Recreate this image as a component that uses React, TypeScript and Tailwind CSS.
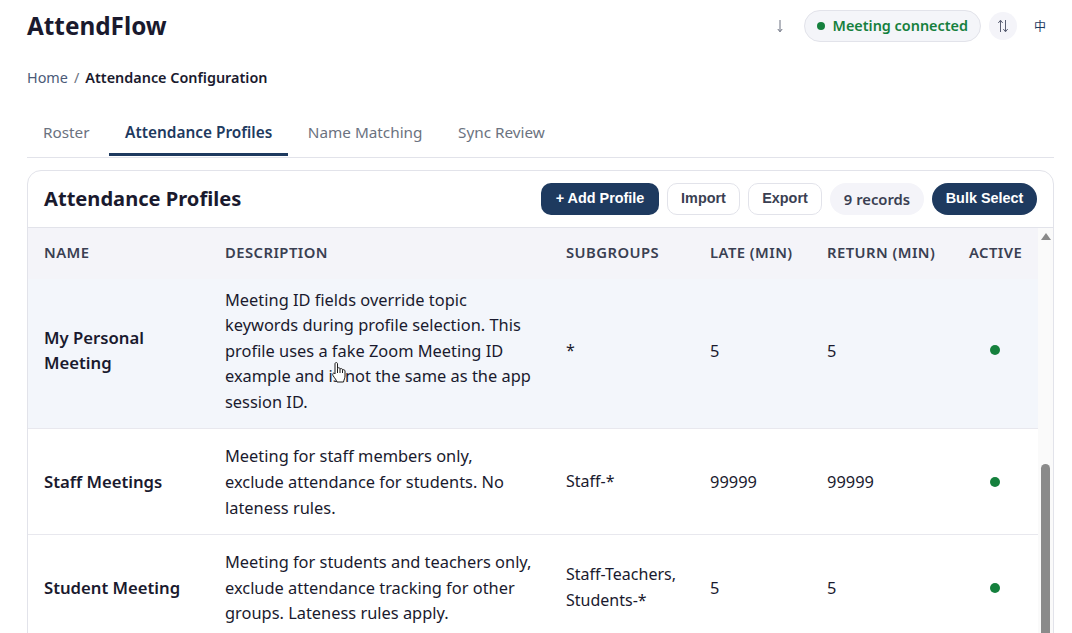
const profiles = [
  {
    name: 'My Personal Meeting',
    description:
      'Meeting ID fields override topic keywords during profile selection. This profile uses a fake Zoom Meeting ID example and is not the same as the app session ID.',
    subgroups: '*',
    late: '5',
    ret: '5',
    rowClass: 'bg-[#f3f6fb]',
    cellClass: 'pt-[7.500px] pb-[13.500px]',
  },
  {
    name: 'Staff Meetings',
    description: 'Meeting for staff members only, exclude attendance for students. No lateness rules.',
    subgroups: 'Staff-*',
    late: '99999',
    ret: '99999',
    rowClass: 'bg-white',
    cellClass: 'pt-[14.500px] pb-[13.500px]',
  },
  {
    name: 'Student Meeting',
    description:
      'Meeting for students and teachers only, exclude attendance tracking for other groups. Lateness rules apply.',
    subgroups: 'Staff-Teachers, Students-*',
    late: '5',
    ret: '5',
    rowClass: 'bg-white',
    cellClass: 'pt-[14.500px] pb-[13.500px]',
  },
]

const tabs = ['Roster', 'Attendance Profiles', 'Name Matching', 'Sync Review']

function HandCursor() {
  return (
    <svg
      viewBox="0 0 14 21"
      className="absolute left-[332px] top-[362px] h-[21px] w-[14px]"
      fill="#ffffff"
      stroke="#1a1a1a"
      strokeWidth="1"
      strokeLinejoin="round"
    >
      <path d="M3 11V2C3 0 5.500 0 5.500 2V6.500C5.500 5.500 8 5.500 8 6.800V7.300C8 6.300 10.500 6.300 10.500 7.600V8.300C10.500 7.300 13 7.500 13 9V14C13 16 12 17.500 11.500 20H5C4.500 18 2.500 16 1 13.500C0 11.500 1.800 10.200 3 12Z" />
      <path d="M5.500 6.500V11M8 7.300V11M10.500 8.300V11" fill="none" />
    </svg>
  )
}

export default function App() {
  return (
    <div className="relative h-[633px] w-[1072px] overflow-hidden bg-white font-['Noto_Sans',sans-serif] text-[#1a1a2e]">
      <div className="pl-[27px] pr-[18px]">
        <header className="flex h-[52px] items-center justify-between">
          <h1 className="text-[24.300px] font-bold leading-none">AttendFlow</h1>
          <div className="flex items-center">
            <svg viewBox="0 0 10 14" className="mr-[19px] h-[14px] w-[10px]" fill="none" stroke="#6b7080" strokeWidth="1">
              <path d="M5 1v11.500M2.800 10l2.200 2.800L7.200 10" />
            </svg>
            <span className="flex h-[32px] items-center gap-[8px] rounded-full border border-[#e2e3ea] bg-[#f4f5f9] px-[12px] text-[14.400px] font-semibold text-[#15803d]">
              <span className="h-[8px] w-[8px] rounded-full bg-[#15803d]" />
              Meeting connected
            </span>
            <span className="ml-[8px] flex h-[28px] w-[28px] items-center justify-center rounded-full bg-[#f4f4f9]">
              <svg viewBox="0 0 12 14" className="h-[14px] w-[12px]" fill="none" stroke="#5a5f73" strokeWidth="1">
                <path d="M3.500 13V1.500M1.300 4l2.200-2.800L5.700 4M8.500 1v11.500M6.300 10l2.200 2.800 2.200-2.800" />
              </svg>
            </span>
            <span className="ml-[9px] flex h-[28px] w-[28px] items-center justify-center font-['Noto_Sans_CJK_SC',sans-serif] text-[12px] text-[#1e3a5f]">
              中
            </span>
          </div>
        </header>

        <nav className="mt-[15px] flex h-[22px] items-center text-[14.400px]">
          <span className="text-[#4a5a78]">Home</span>
          <span className="mx-[6px] text-[#6b7280]">/</span>
          <span className="font-semibold text-[#1a1a2e]">Attendance Configuration</span>
        </nav>

        <div className="mt-[21px] flex h-[48px] items-start gap-[3.500px] border-b border-[#e2e3ea]">
          {tabs.map((tab) => (
            <div
              key={tab}
              className={
                tab === 'Attendance Profiles'
                  ? 'flex h-[46px] items-center border-b-[3px] border-[#1e3a5f] px-[16px] pt-[2px] text-[15.400px] font-semibold text-[#1e3a5f]'
                  : 'flex h-[46px] items-center border-b-[3px] border-transparent px-[16px] pt-[2px] text-[15.300px] text-[#6b7280]'
              }
            >
              {tab}
            </div>
          ))}
        </div>

        <section className="mt-[12px] h-[600px] overflow-hidden rounded-[14px] border border-[#e2e3ea] bg-white">
          <div className="flex h-[57px] items-center justify-between border-b border-[#e2e3ea] px-[16px]">
            <h2 className="text-[20.100px] font-bold leading-none">Attendance Profiles</h2>
            <div className="flex items-center gap-[8px] font-['Liberation_Sans',sans-serif] text-[14.400px] font-bold">
              <button className="h-[32px] w-[118px] rounded-[10px] bg-[#1e3a5f] text-white">+ Add Profile</button>
              <button className="h-[32px] w-[73px] rounded-[10px] border border-[#e2e3ea] bg-white text-[#3a3f52]">
                Import
              </button>
              <button className="h-[32px] w-[74px] rounded-[10px] border border-[#e2e3ea] bg-white text-[#3a3f52]">
                Export
              </button>
              <span className="flex h-[32px] w-[94px] items-center justify-center rounded-full bg-[#f4f4f9] font-['Noto_Sans',sans-serif] text-[14.800px] font-semibold text-[#3a3f52]">
                9 records
              </span>
              <button className="h-[32px] w-[105px] rounded-full bg-[#1e3a5f] text-white">Bulk Select</button>
            </div>
          </div>

          <div className="flex items-start">
            <table className="w-[1010px] table-fixed border-collapse text-[16.400px] leading-[25.600px] text-[#1a1a2e]">
              <colgroup>
                <col className="w-[181px]" />
                <col className="w-[341px]" />
                <col className="w-[144px]" />
                <col className="w-[117px]" />
                <col className="w-[142px]" />
                <col className="w-[85px]" />
              </colgroup>
              <thead>
                <tr className="h-[51px] bg-[#f4f4f9] text-left text-[14.800px] tracking-[0.450px] text-[#3a3f52]">
                  <th className="px-[16px] pb-[1px] font-semibold">NAME</th>
                  <th className="px-[16px] pb-[1px] font-semibold">DESCRIPTION</th>
                  <th className="px-[16px] pb-[1px] font-semibold">SUBGROUPS</th>
                  <th className="px-[16px] pb-[1px] font-semibold">LATE (MIN)</th>
                  <th className="px-[16px] pb-[1px] font-semibold">RETURN (MIN)</th>
                  <th className="pb-[1px] pl-[16px] pr-[16px] text-center font-semibold">ACTIVE</th>
                </tr>
              </thead>
              <tbody>
                {profiles.map((profile) => (
                  <tr key={profile.name} className={`border-b border-[#e8e8ee] ${profile.rowClass}`}>
                    <td className={`px-[16px] text-[16.700px] font-semibold ${profile.cellClass}`}>{profile.name}</td>
                    <td className={`pl-[16px] pr-[18px] ${profile.cellClass}`}>{profile.description}</td>
                    <td className={`px-[16px] text-[16px] ${profile.cellClass}`}>{profile.subgroups}</td>
                    <td className={`px-[16px] ${profile.cellClass}`}>{profile.late}</td>
                    <td className={`px-[16px] ${profile.cellClass}`}>{profile.ret}</td>
                    <td className={`px-[16px] ${profile.cellClass}`}>
                      <span className="mx-auto block h-[10px] w-[10px] -translate-x-px rounded-full bg-[#15803d]" />
                    </td>
                  </tr>
                ))}
              </tbody>
            </table>
            <div className="flex h-[440px] w-[16px] flex-col items-center bg-[#fafafa]">
              <svg viewBox="0 0 10 7" className="mt-[5px] h-[7px] w-[10px] shrink-0" fill="#8a8a8a">
                <path d="M5 0l5 7H0z" />
              </svg>
              <div className="mt-[224px] h-[200px] w-[9px] shrink-0 rounded-t-full bg-[#8a8a8a]" />
            </div>
          </div>
        </section>
      </div>
      <HandCursor />
    </div>
  )
}
